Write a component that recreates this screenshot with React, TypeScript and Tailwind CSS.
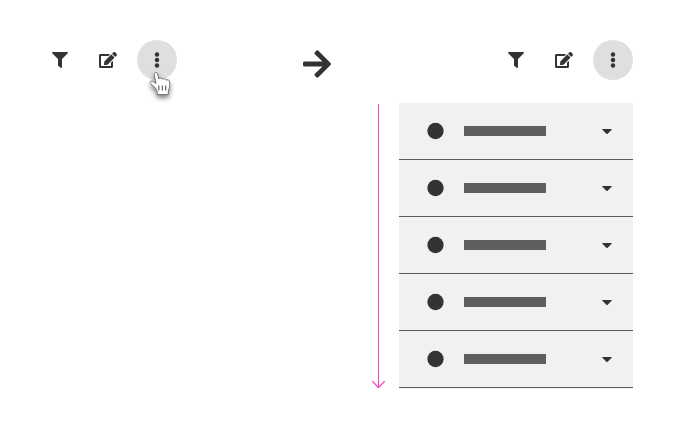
import { FaArrowRight, FaEdit, FaFilter } from "react-icons/fa";

function Dots() {
  return (
    <div className="flex size-10 items-center justify-center rounded-full bg-[#dfdfdf]">
      <svg width="6" height="18" viewBox="0 0 6 18" fill="#333333">
        <circle cx="3" cy="3.6" r="2.25" />
        <circle cx="3" cy="9" r="2.25" />
        <circle cx="3" cy="14.4" r="2.25" />
      </svg>
    </div>
  );
}

function Toolbar() {
  return (
    <div className="flex h-10 items-center text-[#333333]">
      <FaFilter className="h-4 w-4" />
      <FaEdit className="ml-[31px] h-4 w-[18px]" />
      <div className="ml-5">
        <Dots />
      </div>
    </div>
  );
}

function HandCursor() {
  return (
    <svg
      className="absolute left-[96px] top-[30px] overflow-visible drop-shadow-[0_3px_2.5px_rgba(0,0,0,0.5)]"
      width="24"
      height="27"
      viewBox="0 0 24 27"
    >
      <path
        d="M7 17.5 C5.8 16.6 4.4 15.2 2.9 13.9 C1.1 12.3 3 10.2 5.2 11.6 L8 13.5 L6.2 4.6 C5.8 2 9 1.6 9.6 4 L10.8 9 C11.6 7.6 14 7.7 14.4 9.3 C15.5 8.2 17.6 8.6 18 10.2 C19.3 9.2 21.3 10 21.5 11.7 C22 15.6 21.6 18.4 20.3 21 V24.6 H9.2 V21.4 Z"
        fill="white"
        stroke="#666666"
        strokeWidth="0.9"
        strokeLinejoin="round"
      />
      <path d="M10.8 15.5V20.5M14.3 15.5V20.5M17.7 15.5V20.5" stroke="#555555" strokeWidth="1.1" />
    </svg>
  );
}

function Row() {
  return (
    <div className="flex h-[57px] items-center border-b border-[#5a5a5a] pl-[28px] pr-[21px]">
      <svg width="17" height="16" viewBox="0 0 17 16" className="overflow-visible">
        <circle cx="8.5" cy="8" r="8.15" fill="#333333" />
      </svg>
      <div className="ml-5 h-2.5 w-[82px] bg-[#5e5e5e]" />
      <svg className="ml-auto" width="10" height="8" viewBox="0 0 10 8">
        <path d="M.7 1.9H9.3Q10.2 2.1 9.6 2.8L5.7 6.7Q5 7.3 4.3 6.7L.4 2.8Q-.2 2.1.7 1.9Z" fill="#333333" />
      </svg>
    </div>
  );
}

export default function App() {
  return (
    <main className="flex h-[428px] w-[673px] items-start bg-white pt-10">
      <div className="relative ml-[52px]">
        <Toolbar />
        <HandCursor />
      </div>
      <FaArrowRight className="ml-[126px] mt-2 h-8 w-7 text-[#333333]" />
      <div className="ml-[40px] flex flex-col items-end">
        <Toolbar />
        <div className="mt-[23px] flex">
          <svg width="15" height="286" viewBox="0 0 15 286" fill="none" stroke="#f24dbd">
            <path d="M7.5 1V285" strokeWidth="1.1" />
            <path d="M1.3 278.3L7.5 284.5L13.7 278.3" strokeWidth="1.3" />
          </svg>
          <div className="ml-[13px] w-[234px] bg-[#f2f0f1]">
            <Row />
            <Row />
            <Row />
            <Row />
            <Row />
          </div>
        </div>
      </div>
    </main>
  );
}
